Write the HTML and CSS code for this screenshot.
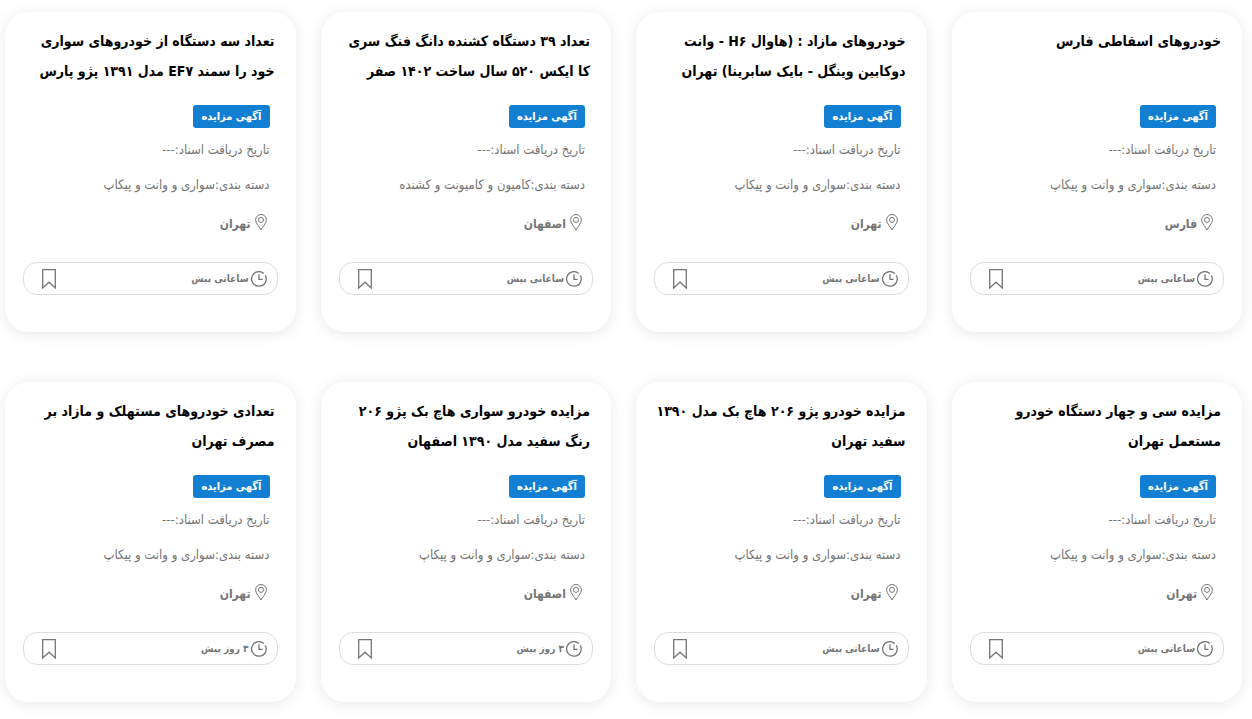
FILE: index.html
```html
<!DOCTYPE html>
<html lang="fa" dir="rtl">
<head>
<meta charset="utf-8">
<meta name="viewport" content="width=device-width, initial-scale=1">
<title>آگهی مزایده</title>
<link rel="stylesheet" href="styles.css">
</head>
<body>
<main class="cards" id="cards"></main>

<template id="card-template">
  <article class="card">
    <h2 class="card-title"><a href="#"></a></h2>
    <div class="card-body">
      <span class="badge">آگهی مزایده</span>
      <p class="meta">تاریخ دریافت اسناد:---</p>
      <p class="meta category"></p>
      <p class="place">
        <svg class="pin" viewBox="0 0 12 17" aria-hidden="true"><path d="M6 16C5 13.500 .6 9.600 .6 5.900a5.400 5.400 0 0 1 10.800 0C11.400 9.600 7 13.500 6 16z"/><circle cx="6" cy="5.900" r="2.500"/></svg>
        <span class="place-name"></span>
      </p>
    </div>
    <footer class="card-footer">
      <span class="time">
        <svg class="clock" viewBox="0 0 16 16" aria-hidden="true"><path d="M14.300 4.400A7.300 7.300 0 1 1 12.800 2.500M8 3.200V8.300h3.600"/></svg>
        <span class="time-text"></span>
      </span>
      <button class="bookmark" type="button" aria-label="نشان کردن">
        <svg viewBox="0 0 14 20" aria-hidden="true"><path d="M.7 .7h12.600v18.200L7 13.200.7 18.900z"/></svg>
      </button>
    </footer>
  </article>
</template>
<script src="cards.js"></script>
</body>
</html>
```
FILE: styles.css
```css
* {
  box-sizing: border-box;
}

body {
  margin: 0;
  background: #fff;
  color: #757575;
  font-family: "DejaVu Sans Condensed", "DejaVu Sans", sans-serif;
}

.cards {
  display: grid;
  grid-template-columns: repeat(auto-fill, minmax(280px, 1fr));
  gap: 50px 25px;
  padding: 12px 10px 16px 5px;
}

.card {
  display: flex;
  flex-direction: column;
  padding: 14px 18px 37px;
  border-radius: 24px;
  background: #fff;
  box-shadow: 0 2px 16px rgba(0, 0, 0, 0.09);
}

.card-title {
  min-height: 60px;
  margin: 0 3px 19px -12px;
  font-size: 14px;
  font-weight: 700;
  line-height: 30px;
}

.card-title a {
  color: #000;
  text-decoration: none;
  white-space: pre-line;
}

.card-body {
  padding: 0 8px;
}

.badge {
  display: block;
  width: fit-content;
  padding: 0 8px;
  border-radius: 3px;
  background: #127fd2;
  color: #fff;
  font-size: 11px;
  font-weight: 700;
  line-height: 23px;
}

.meta {
  margin: 11px 0 0;
  font-size: 13px;
  line-height: 22px;
}

.category {
  margin-top: 13px;
}

.place {
  display: flex;
  align-items: center;
  gap: 4px;
  margin: 16px 3px 0 0;
  font-size: 12px;
  font-weight: 700;
  line-height: 24px;
}

.pin {
  width: 12px;
  height: 17px;
  margin-bottom: 4px;
}

svg {
  display: block;
  fill: none;
  stroke: #757575;
  stroke-width: 1;
}

.card-footer {
  display: flex;
  align-items: center;
  justify-content: space-between;
  height: 33px;
  margin-top: 26px;
  padding: 0 10px 0 18px;
  border: 1px solid #ddd;
  border-radius: 14px;
}

.time {
  display: flex;
  align-items: center;
  gap: 2px;
  font-size: 10px;
  font-weight: 700;
}

.clock {
  width: 16px;
  height: 16px;
  stroke-width: 1.300;
}

.bookmark {
  padding: 0;
  border: 0;
  background: none;
  cursor: pointer;
}

.bookmark svg {
  width: 14px;
  height: 20px;
  stroke-width: 1.300;
}
```
FILE: cards.js
```js
const cards = [
  { title: "خودروهای اسقاطی فارس", category: "سواری و وانت و پیکاپ", place: "فارس", time: "ساعاتی پیش" },
  { title: "خودروهای مازاد : (هاوال H۶ - وانت\nدوکابین وینگل - بایک سابرینا) تهران", category: "سواری و وانت و پیکاپ", place: "تهران", time: "ساعاتی پیش" },
  { title: "تعداد ۳۹ دستگاه کشنده دانگ فنگ سری\nکا ایکس ۵۲۰ سال ساخت ۱۴۰۲ صفر", category: "کامیون و کامیونت و کشنده", place: "اصفهان", time: "ساعاتی پیش" },
  { title: "تعداد سه دستگاه از خودروهای سواری\nخود را سمند EF۷ مدل ۱۳۹۱ پژو پارس", category: "سواری و وانت و پیکاپ", place: "تهران", time: "ساعاتی پیش" },
  { title: "مزایده سی و چهار دستگاه خودرو\nمستعمل تهران", category: "سواری و وانت و پیکاپ", place: "تهران", time: "ساعاتی پیش" },
  { title: "مزایده خودرو پژو ۲۰۶ هاچ بک مدل ۱۳۹۰\nسفید تهران", category: "سواری و وانت و پیکاپ", place: "تهران", time: "ساعاتی پیش" },
  { title: "مزایده خودرو سواری هاچ بک پژو ۲۰۶\nرنگ سفید مدل ۱۳۹۰ اصفهان", category: "سواری و وانت و پیکاپ", place: "اصفهان", time: "۳ روز پیش" },
  { title: "تعدادی خودروهای مستهلک و مازاد بر\nمصرف تهران", category: "سواری و وانت و پیکاپ", place: "تهران", time: "۳ روز پیش" }
];

const list = document.getElementById("cards");
const template = document.getElementById("card-template");

for (const item of cards) {
  const node = template.content.cloneNode(true);
  node.querySelector(".card-title a").textContent = item.title;
  node.querySelector(".category").textContent = "دسته بندی:" + item.category;
  node.querySelector(".place-name").textContent = item.place;
  node.querySelector(".time-text").textContent = item.time;
  list.append(node);
}
```
